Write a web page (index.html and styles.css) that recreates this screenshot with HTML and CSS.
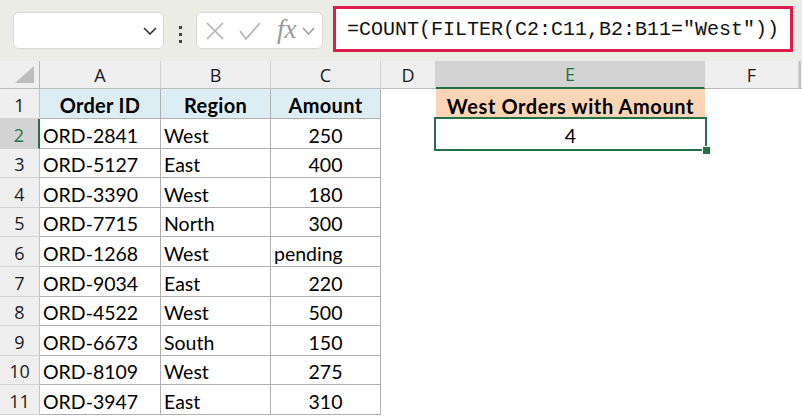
FILE: index.html
```html
<!DOCTYPE html>
<html lang="en">
<head>
  <meta charset="UTF-8">
  <title>Count West Orders</title>
  <link rel="stylesheet" href="styles.css">
</head>
<body>
  <div class="toolbar">
    <div class="name-box">
      <svg class="chev" width="14" height="8" viewBox="0 0 14 8"><polyline points="1,1 7,7 13,1" fill="none" stroke="#333" stroke-width="1.6"/></svg>
    </div>
    <div class="dots"><span></span><span></span><span></span></div>
    <div class="fx-box">
      <svg width="18" height="18" viewBox="0 0 18 18"><path d="M1 1 L17 17 M17 1 L1 17" stroke="#b0b0b0" stroke-width="1.6" fill="none"/></svg>
      <svg class="check" width="22" height="18" viewBox="0 0 22 18"><polyline points="1,9 7,17 21,1" fill="none" stroke="#b0b0b0" stroke-width="1.6"/></svg>
      <span class="fx">fx</span>
      <svg width="13" height="8" viewBox="0 0 13 8"><polyline points="1,1 6.5,7 12,1" fill="none" stroke="#999" stroke-width="1.4"/></svg>
    </div>
    <div class="formula">=COUNT(FILTER(C2:C11,B2:B11="West"))</div>
  </div>

  <div class="sheet">
    <div class="corner"><span class="tri"></span></div>
    <div class="col-h">A</div>
    <div class="col-h">B</div>
    <div class="col-h">C</div>
    <div class="col-h">D</div>
    <div class="col-h active">E</div>
    <div class="col-h">F</div>
    <div class="col-h last"></div>

    <div class="row-h">1</div>
    <div class="cell head">Order ID</div>
    <div class="cell head">Region</div>
    <div class="cell head">Amount</div>
    <div class="res-head">West Orders with Amount</div>

    <div class="row-h active">2</div>
    <div class="cell">ORD-2841</div>
    <div class="cell">West</div>
    <div class="cell num">250</div>
    <div class="res-val">4</div>

    <div class="row-h">3</div>
    <div class="cell">ORD-5127</div>
    <div class="cell">East</div>
    <div class="cell num">400</div>

    <div class="row-h">4</div>
    <div class="cell">ORD-3390</div>
    <div class="cell">West</div>
    <div class="cell num">180</div>

    <div class="row-h">5</div>
    <div class="cell">ORD-7715</div>
    <div class="cell">North</div>
    <div class="cell num">300</div>

    <div class="row-h">6</div>
    <div class="cell">ORD-1268</div>
    <div class="cell">West</div>
    <div class="cell">pending</div>

    <div class="row-h">7</div>
    <div class="cell">ORD-9034</div>
    <div class="cell">East</div>
    <div class="cell num">220</div>

    <div class="row-h">8</div>
    <div class="cell">ORD-4522</div>
    <div class="cell">West</div>
    <div class="cell num">500</div>

    <div class="row-h">9</div>
    <div class="cell">ORD-6673</div>
    <div class="cell">South</div>
    <div class="cell num">150</div>

    <div class="row-h">10</div>
    <div class="cell">ORD-8109</div>
    <div class="cell">West</div>
    <div class="cell num">275</div>

    <div class="row-h">11</div>
    <div class="cell">ORD-3947</div>
    <div class="cell">East</div>
    <div class="cell num">310</div>
  </div>
</body>
</html>
```

FILE: styles.css
```css
body {
  margin: 0;
  width: 802px;
  height: 416px;
  overflow: hidden;
  background: #fff;
  font-family: Lato, "Noto Sans", sans-serif;
}
.toolbar {
  height: 61px;
  background: #ebece6;
  display: flex;
  align-items: flex-start;
  padding-left: 13px;
  box-sizing: border-box;
}
.name-box {
  width: 151px;
  height: 37px;
  margin-top: 12px;
  background: #fff;
  border: 1px solid #d8d8d4;
  border-radius: 6px;
  box-sizing: border-box;
  display: flex;
  align-items: center;
  justify-content: flex-end;
  padding-right: 6px;
}
.dots {
  width: 32px;
  margin-top: 26px;
  display: flex;
  flex-direction: column;
  align-items: center;
  gap: 4px;
}
.dots span {
  width: 3px;
  height: 3px;
  background: #444;
}
.fx-box {
  width: 127px;
  height: 37px;
  margin-top: 12px;
  background: #fff;
  border: 1px solid #d8d8d4;
  border-radius: 6px;
  box-sizing: border-box;
  display: flex;
  align-items: center;
  padding-left: 9px;
}
.fx-box .check {
  margin-left: 15px;
}
.fx {
  font-family: "Liberation Serif", serif;
  font-style: italic;
  font-size: 27px;
  color: #9a9a9a;
  margin-left: 16px;
  margin-right: 5px;
  line-height: 1;
  margin-top: -2px;
}
.formula {
  width: 460px;
  height: 46px;
  margin-top: 6px;
  margin-left: 10px;
  border: 3px solid #dc1d4a;
  background: #fff;
  box-sizing: border-box;
  padding-left: 11px;
  font-family: "Liberation Mono", monospace;
  font-size: 20px;
  line-height: 41px;
  color: #111;
  white-space: nowrap;
}
.sheet {
  display: grid;
  grid-template-columns: 40px 121px 110px 110px 55px 269px 94px 3px;
  grid-template-rows: 28px 30px 30px 29px 30px 29px 30px 30px 29px 30px 29px 30px;
}
.corner, .col-h, .row-h {
  background: #efefef;
  font-family: "Open Sans", sans-serif;
  font-size: 18px;
  color: #1a1a1a;
  box-sizing: border-box;
  display: flex;
  align-items: center;
  justify-content: center;
}
.corner {
  position: relative;
  border-right: 1px solid #b8b8b8;
  border-bottom: 1px solid #bcbcbc;
}
.tri {
  position: absolute;
  right: 5px;
  bottom: 5px;
  width: 0;
  height: 0;
  border-left: 19px solid transparent;
  border-bottom: 17px solid #bdbdbd;
}
.col-h {
  border-right: 1px solid #d2d2d2;
  border-bottom: 1px solid #bcbcbc;
}
.col-h.active {
  background: #d3d3d3;
  color: #217346;
  border-bottom: 2px solid #217346;
}
.col-h.last {
  border-right: none;
  border-left: 2px solid #c4c4c4;
}
.row-h {
  grid-column: 1;
  border-right: 1px solid #c4c4c4;
  border-bottom: 1px solid #d4d4d4;
  padding-top: 2px;
}
.row-h.active {
  background: #d3d3d3;
  color: #217346;
  border-right: 2px solid #217346;
}
.cell {
  border-right: 1px solid #b0b0b0;
  border-bottom: 1px solid #b0b0b0;
  box-sizing: border-box;
  font-size: 19.5px;
  color: #000;
  display: flex;
  align-items: center;
  padding: 3px 0 0 3px;
}
.cell.head {
  background: #ddedf4;
  font-weight: bold;
  font-size: 20px;
  letter-spacing: 0.3px;
  justify-content: center;
  padding-left: 0;
}
.cell.num {
  justify-content: center;
  padding-left: 0;
}
.res-head {
  grid-column: 6;
  background: #fcd5b6;
  font-size: 20px;
  font-weight: bold;
  letter-spacing: 0.6px;
  display: flex;
  align-items: center;
  justify-content: center;
  padding-top: 3px;
  box-sizing: border-box;
}
.res-val {
  grid-column: 6;
  position: relative;
  font-size: 19.5px;
  display: flex;
  align-items: center;
  justify-content: center;
  padding-top: 3px;
  box-sizing: border-box;
  outline: 2px solid #217346;
  outline-offset: 0;
}
.res-val::after {
  content: "";
  position: absolute;
  right: -5px;
  bottom: -5px;
  width: 7px;
  height: 7px;
  background: #217346;
  border-left: 1px solid #fff;
  border-top: 1px solid #fff;
}
```
